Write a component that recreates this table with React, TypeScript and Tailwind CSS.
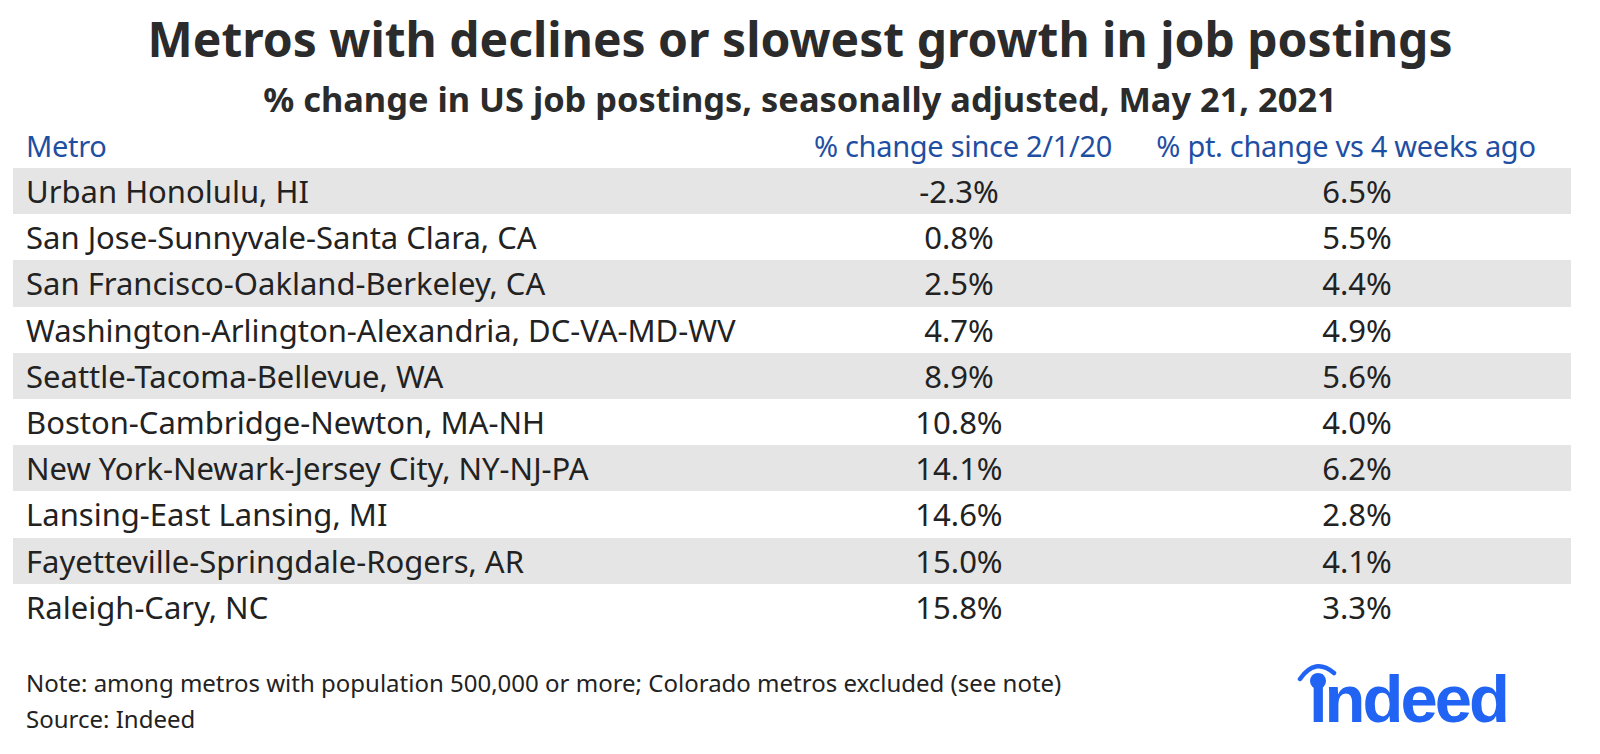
const rows: [string, string, string][] = [
  ["Urban Honolulu, HI", "-2.3%", "6.5%"],
  ["San Jose-Sunnyvale-Santa Clara, CA", "0.8%", "5.5%"],
  ["San Francisco-Oakland-Berkeley, CA", "2.5%", "4.4%"],
  ["Washington-Arlington-Alexandria, DC-VA-MD-WV", "4.7%", "4.9%"],
  ["Seattle-Tacoma-Bellevue, WA", "8.9%", "5.6%"],
  ["Boston-Cambridge-Newton, MA-NH", "10.8%", "4.0%"],
  ["New York-Newark-Jersey City, NY-NJ-PA", "14.1%", "6.2%"],
  ["Lansing-East Lansing, MI", "14.6%", "2.8%"],
  ["Fayetteville-Springdale-Rogers, AR", "15.0%", "4.1%"],
  ["Raleigh-Cary, NC", "15.8%", "3.3%"],
];

function IndeedLogo() {
  return (
    <div className="relative w-[200px] h-[64px]">
      <span
        className="block text-[67px] leading-none font-bold tracking-[-3px] text-[#2164f3]"
        style={{ fontFamily: '"Liberation Sans", Arial, sans-serif' }}
      >
        indeed
      </span>
      {/* swoosh + round dot over the i */}
      <svg className="absolute left-[-12px] top-[-4px]" width="44" height="32" viewBox="0 0 44 32">
        <path d="M3 18 Q 18 -4 37 12" fill="none" stroke="#2164f3" strokeWidth="4.5" strokeLinecap="round" />
        <circle cx="21" cy="20" r="8" fill="#2164f3" />
      </svg>
    </div>
  );
}

export default function App() {
  return (
    <div
      className="w-[1600px] h-[754px] bg-white text-[#222] flex flex-col"
      style={{ fontFamily: '"Noto Sans", "Open Sans", sans-serif' }}
    >
      <h1 className="h-[74px] pt-[9px] text-center text-[48px] leading-[60px] font-bold text-[#2b2b2b]">
        Metros with declines or slowest growth in job postings
      </h1>
      <h2 className="h-[50px] text-center text-[34.4px] leading-[50px] font-bold text-[#2b2b2b]">
        % change in US job postings, seasonally adjusted, May 21, 2021
      </h2>

      <div className="mx-[13px] w-[1558px]">
        <div className="grid grid-cols-[747px_398px_398px] h-[44px] items-center text-[29px] leading-[40px] tracking-[-0.3px] text-[#1f4fa3] whitespace-nowrap">
          <div className="pl-[13px]">Metro</div>
          <div className="flex justify-center pl-[8px]">% change since 2/1/20</div>
          <div className="flex justify-center pr-[22px]">% pt. change vs 4 weeks ago</div>
        </div>
        {rows.map((r, i) => (
          <div
            key={r[0]}
            className={`grid grid-cols-[747px_398px_398px] h-[46.2px] items-center text-[31px] leading-[42px] ${i % 2 === 0 ? "bg-[#e5e5e5]" : "bg-white"}`}
          >
            <div className="pl-[13px] whitespace-nowrap">{r[0]}</div>
            <div className="text-center">{r[1]}</div>
            <div className="text-center">{r[2]}</div>
          </div>
        ))}
      </div>

      <div className="flex justify-between items-start mt-[35px] pl-[26px] pr-[91px]">
        <div className="text-[24px] leading-[36px] text-[#222]">
          <p>Note: among metros with population 500,000 or more; Colorado metros excluded (see note)</p>
          <p>Source: Indeed</p>
        </div>
        <IndeedLogo />
      </div>
    </div>
  );
}
